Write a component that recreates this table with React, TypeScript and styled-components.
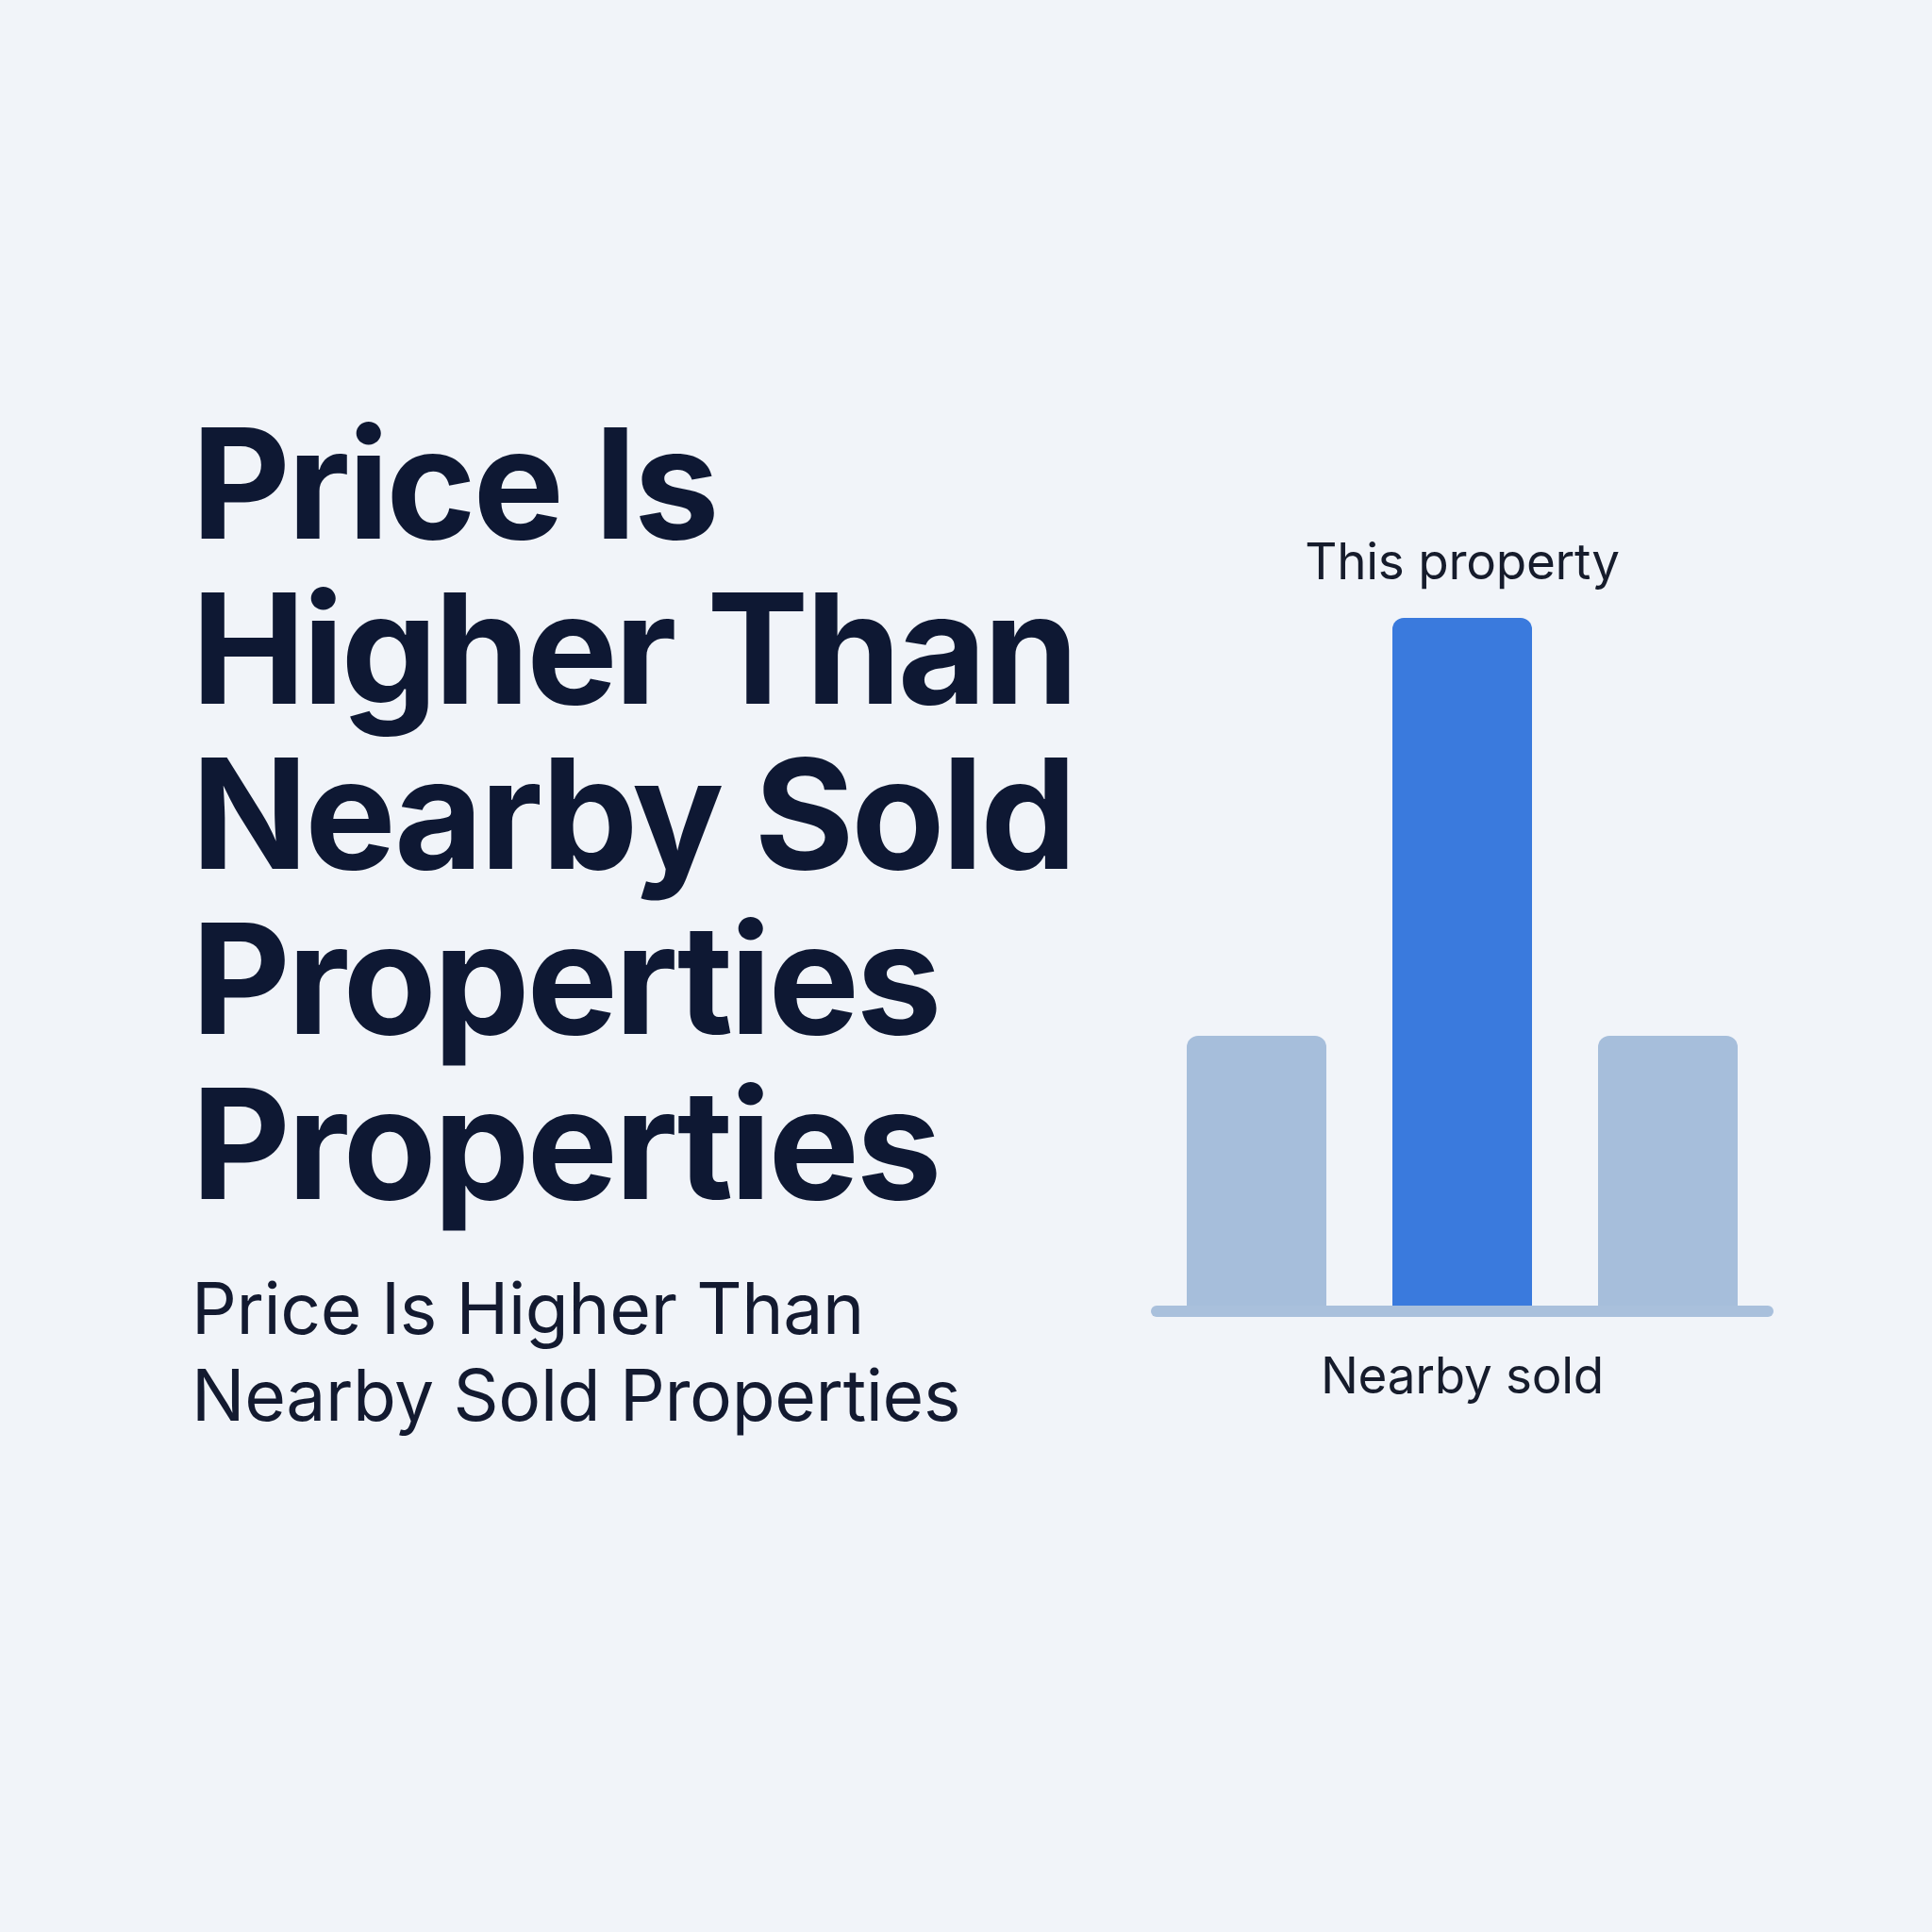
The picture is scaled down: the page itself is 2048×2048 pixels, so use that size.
import React from 'react'
import styled, { createGlobalStyle } from 'styled-components'

const GlobalStyle = createGlobalStyle`
  html, body {
    margin: 0;
    padding: 0;
    background: #f1f4f9;
  }
  body {
    font-family: Inter, "Noto Sans", "Liberation Sans", sans-serif;
  }
`

const Page = styled.div`
  width: 2048px;
  height: 2048px;
  box-sizing: border-box;
  display: flex;
  align-items: flex-start;
  padding: 425px 0 0 203px;
  background: #f1f4f9;
`

const TextColumn = styled.div`
  flex: 0 0 1017px;
  display: flex;
  flex-direction: column;
`

const Headline = styled.h1`
  margin: 0;
  font-size: 162px;
  line-height: 175px;
  font-weight: 700;
  letter-spacing: -0.02em;
  color: #0e1833;
`

const Subtitle = styled.p`
  margin: 41px 0 0;
  font-size: 75px;
  line-height: 92px;
  font-weight: 400;
  letter-spacing: -0.005em;
  color: #131a30;
`

const ChartColumn = styled.div`
  flex: 0 0 660px;
  margin-top: 137px;
  display: flex;
  flex-direction: column;
  align-items: center;
`

const ChartLabel = styled.div<{ $top?: boolean }>`
  font-size: 53px;
  line-height: 66px;
  font-weight: 400;
  letter-spacing: -0.005em;
  color: #161c2c;
  margin: ${({ $top }) => ($top ? '0 0 27px' : '29px 0 0')};
`

const BarRow = styled.div`
  height: 729px;
  display: flex;
  align-items: flex-end;
  gap: 70px;
`

const Bar = styled.div<{ $height: number; $highlight?: boolean }>`
  width: 148px;
  height: ${({ $height }) => $height}px;
  border-radius: 12px 12px 0 0;
  background: ${({ $highlight }) => ($highlight ? '#3a7add' : '#a6bedb')};
`

const Axis = styled.div`
  width: 660px;
  height: 12px;
  border-radius: 6px;
  background: #a9c0dc;
`

const bars = [
  { id: 'left', height: 286, highlight: false },
  { id: 'this', height: 729, highlight: true },
  { id: 'right', height: 286, highlight: false },
]

export default function App() {
  return (
    <>
      <GlobalStyle />
      <Page>
        <TextColumn>
          <Headline>
            Price Is
            <br />
            Higher Than
            <br />
            Nearby Sold
            <br />
            Properties
            <br />
            Properties
          </Headline>
          <Subtitle>
            Price Is Higher Than
            <br />
            Nearby Sold Properties
          </Subtitle>
        </TextColumn>
        <ChartColumn>
          <ChartLabel $top>This property</ChartLabel>
          <BarRow>
            {bars.map((b) => (
              <Bar key={b.id} $height={b.height} $highlight={b.highlight} />
            ))}
          </BarRow>
          <Axis />
          <ChartLabel>Nearby sold</ChartLabel>
        </ChartColumn>
      </Page>
    </>
  )
}
